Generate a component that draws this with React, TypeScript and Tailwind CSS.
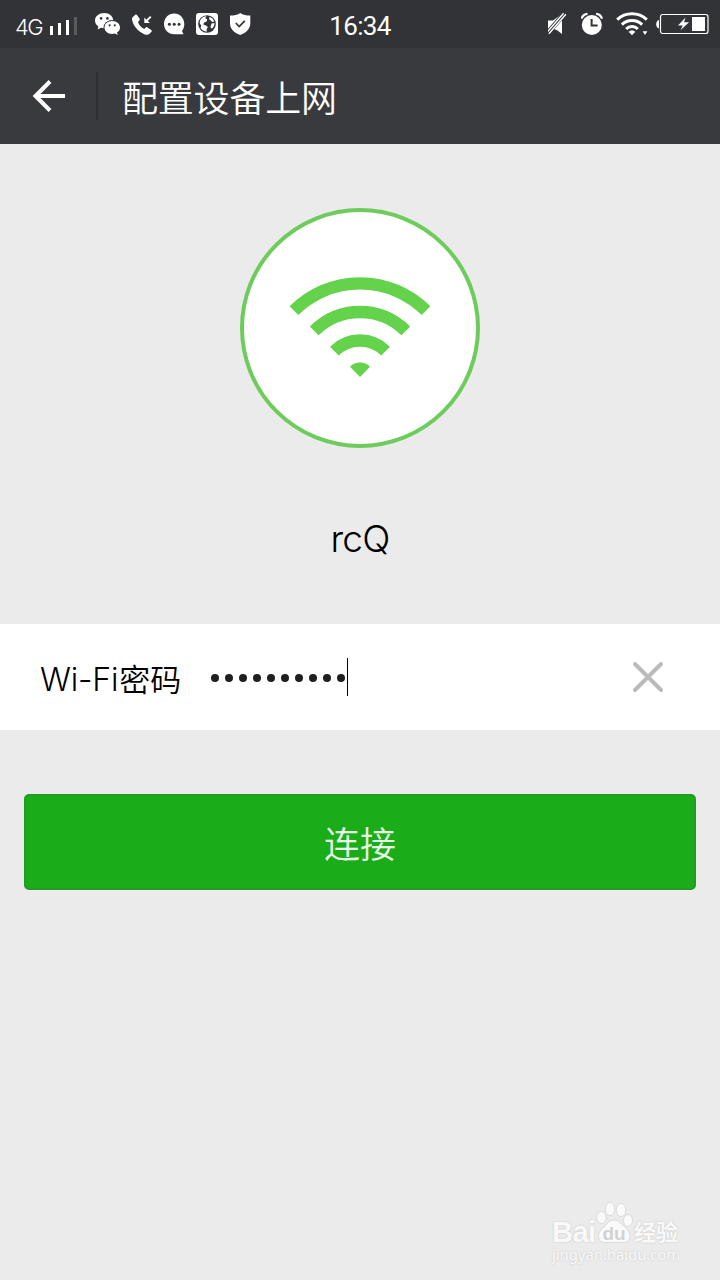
import type { ReactNode } from "react"
import clsx from "clsx"

const PASSWORD_LENGTH = 10

function StatusIcon({ width, className, children }: { width: number; className?: string; children: ReactNode }) {
  return (
    <svg
      width={width}
      height={24}
      viewBox={`0 0 ${width} 24`}
      fill="currentColor"
      className={clsx("shrink-0", className)}
    >
      {children}
    </svg>
  )
}

function StatusBar() {
  return (
    <div className="h-12 bg-[#323337] text-white flex items-center justify-between relative">
      {/* Left: network + notifications */}
      <div className="flex items-center pl-[15px]">
        <span className="w-[35px] text-[22px] leading-6 tracking-[-1.5px] font-['Inter'] font-[350] relative top-[3px]">4G</span>

        {/* Signal bars */}
        <StatusIcon width={28}>
          <path d="M0 14h3v9H0zM8 11h3v12H8zM16 8h3v15h-3z" />
          <path d="M24 5h3v18h-3z" fill="#5a5b5f" />
        </StatusIcon>

        {/* WeChat */}
        <StatusIcon width={26} className="ml-[17px]">
          <path d="M9.2 1C4.1 1 0 4.3 0 8.6c0 2.5 1.3 4.6 3.4 6l-.8 3 3.3-1.8c1 .3 2.1.5 3.3.5C14.300 16.300 18.300 13 18.300 8.700S14.300 1 9.200 1z" />
          <ellipse cx="17.200" cy="15.500" rx="8.700" ry="7.600" fill="#323337" />
          <path d="M17.200 8.900c-4.400 0-7.700 2.900-7.700 6.500s3.300 6.500 7.700 6.500c1 0 2-.2 2.800-.4l2.700 1.500-.7-2.500c1.900-1.200 3-3 3-5.100 0-3.600-3.400-6.500-7.800-6.500z" />
          <g fill="#323337">
            <circle cx="6.100" cy="6.400" r="1.300" />
            <circle cx="12.400" cy="6.400" r="1.300" />
            <circle cx="14.600" cy="13.300" r="1.100" />
            <circle cx="19.800" cy="13.300" r="1.100" />
          </g>
        </StatusIcon>

        {/* Incoming call */}
        <StatusIcon width={21} className="ml-[11px]">
          <path d="M0.300 5.500 3.300 2.700c.6-.5 1.300-.4 1.700.2L7.600 6.800c.4.7.3 1.300-.2 1.800L6 10c.9 3 3.200 5.500 6.300 6.900l1.400-1.400c.5-.5 1.100-.5 1.700-.1l3.900 2.600c.6.5.7 1.100.2 1.700l-2.200 2.300c-1 .9-2.700 1-4.500.4C6.700 20.200 1.400 14.500.2 8.300c-.2-1.100-.2-2.200.1-2.800z" />
          <path d="M18.800 4.600 14.500 8.900" fill="none" stroke="currentColor" strokeWidth="2" />
          <path d="M12.300 5.500v5.600h5.600z" />
        </StatusIcon>

        {/* Message */}
        <StatusIcon width={21} className="ml-[11px]">
          <path d="M10.200 1.500C4.300 1.500 0 6.200 0 12s4.400 10.300 10.200 10.300h9.300L18 19c1.500-1.900 2.300-4.300 2.300-7C20.300 6.200 16 1.500 10.200 1.500z" />
          <g fill="#323337">
            <circle cx="5.400" cy="12.300" r="1.500" />
            <circle cx="10.200" cy="12.300" r="1.500" />
            <circle cx="15" cy="12.300" r="1.500" />
          </g>
        </StatusIcon>

        {/* Browser */}
        <StatusIcon width={22} className="ml-[11px]">
          <rect y="1" width="22" height="22" rx="3" />
          <circle cx="11" cy="12" r="8.800" fill="#323337" />
          <path d="M4.300 8c1.400-2.300 3.400-3.700 6.200-3.800L9.300 6l1.900 1.600-.6 2-2.500.8-.8 2.200 2.600.9 2 1.600-1.400 2.300.6 2.200c-3 .2-5.200-1.300-6.500-3.600l.6-2.600-1.500-2.100c-.1-1.200.1-2.300.6-3.300z" />
          <path d="m13.600 4.700 3.200 2 1.500 2.800-2.100.5-1.600-1.800-1.600-.9zM15.500 11.500l3-.4c0 2.500-.8 4.300-2.600 5.700l-1.500-1.500z" />
        </StatusIcon>

        {/* Security */}
        <StatusIcon width={21} className="ml-3">
          <path d="M10.200 1c2.700 1.800 6 2.500 10.100 2.600v7.700c0 5.500-3.800 9.300-10.100 11.700C3.900 20.600 0 16.800 0 11.300V3.600C4.200 3.500 7.500 2.800 10.200 1z" />
          <path d="m5.800 11 3.400 3.500 5.600-5.700" fill="none" stroke="#323337" strokeWidth="1.700" />
        </StatusIcon>
      </div>

      {/* Clock */}
      <div className="absolute inset-x-0 top-2 text-center text-[26px] leading-9 tracking-[-0.6px] font-['Roboto']">16:34</div>

      {/* Right: mute, alarm, wifi, battery */}
      <div className="flex items-center pr-[11px]">
        <StatusIcon width={20}>
          <path d="M0 8.500h5L14 2v20l-4.500-3.500L5 16.500H0z" />
          <path d="M-.5 21 17 1" stroke="#323337" strokeWidth="5" />
          <path d="M.9 21.700 17.900 2.200M-.4 19.600 15.600 1.300" stroke="currentColor" strokeWidth="1.400" />
        </StatusIcon>

        <StatusIcon width={22} className="ml-[13px]">
          <circle cx="10.800" cy="13" r="10" />
          <path d="M.6 6.700C1.400 3.800 3.400 2 6.500 1.800M21 6.700c-.8-2.900-2.800-4.700-5.900-4.900" fill="none" stroke="currentColor" strokeWidth="2.200" />
          <path d="M10.600 7v6.600h6" fill="none" stroke="#323337" strokeWidth="2" />
        </StatusIcon>

        <StatusIcon width={32} className="ml-[13px]">
          <g fill="none" stroke="currentColor" strokeWidth="3">
            <path d="M1.200 7.600a21.500 21.500 0 0 1 29.600 0" />
            <path d="M5.900 12.600a14.600 14.600 0 0 1 20.200 0" />
            <path d="M10.100 17a8.500 8.500 0 0 1 11.800 0" />
          </g>
          <path d="M12.600 19.800a5 5 0 0 1 6.800 0L16 23.300zM26.600 19.300h4.800L29 23z" />
        </StatusIcon>

        <StatusIcon width={53} className="ml-2">
          <path d="M3 8v8.500C1.200 16 .2 14.500.2 12.200S1.200 8.500 3 8z" />
          <rect x="4.500" y="2.500" width="47.500" height="19" rx="2.200" fill="none" stroke="currentColor" strokeWidth="1.200" />
          <path d="M29.500 5.500 22 13.500h4.800L24.500 18.300l8.500-8h-5z" />
          <path d="M36 5h13v14H36z" />
        </StatusIcon>
      </div>
    </div>
  )
}

function Header() {
  return (
    <header className="h-24 bg-[#393a3e] text-white flex items-center">
      <svg width="33" height="32" viewBox="0 0 33 32" fill="none" stroke="currentColor" strokeWidth="4" className="ml-8">
        <path d="M18 1.500 3.500 16 18 30.500M2.500 16H33" />
      </svg>
      <div className="w-0.5 h-12 bg-[#2e2f32] ml-[31px]" />
      <h1 className="ml-6 text-[36px] leading-[48px] tracking-[-0.2px] font-[350] relative top-[3px]">配置设备上网</h1>
    </header>
  )
}

function WifiBadge() {
  return (
    <svg width="240" height="240" viewBox="0 0 240 240" fill="none">
      <circle cx="120" cy="120" r="118" fill="#fff" stroke="#6dcc5c" strokeWidth="4" />
      <g stroke="#65d24c" strokeWidth="12.400">
        <path d="M54 102.700a93.300 93.300 0 0 1 132 0" />
        <path d="M74.200 122.900a64.800 64.800 0 0 1 91.600 0" />
        <path d="M94.400 143.100a36.200 36.200 0 0 1 51.200 0" />
      </g>
      <path d="M110 158.700a14.200 14.200 0 0 1 20 0L120 168.900z" fill="#65d24c" />
    </svg>
  )
}

function Watermark() {
  return (
    <div className="absolute left-[552px] top-[1200px] w-[130px] text-[#f9f9f9] [text-shadow:0_0_2px_#c4c4c4]">
      <div className="h-[44px] flex items-end">
        <span className="w-[43px] text-[29px] leading-6 font-bold font-['Liberation_Sans'] tracking-[-0.5px]">Bai</span>
        <svg width="38" height="44" viewBox="0 0 38 44" fill="#fafafa" stroke="#dadada" strokeWidth="1" className="shrink-0">
          <ellipse cx="6.500" cy="17.500" rx="4.800" ry="6" />
          <ellipse cx="15" cy="9" rx="4.800" ry="6.600" />
          <ellipse cx="26" cy="10" rx="4.800" ry="6.600" />
          <ellipse cx="33" cy="20.500" rx="4.600" ry="6" />
          <path d="M19 20c5 0 7.500 4 10.500 7 3 2.500 5.500 5 5.500 9 0 4.500-2.500 6.500-7 6.500H11c-5 0-7.500-2-7.500-6.500 0-4 2.500-6.500 5.500-9 3-3 5-7 10-7z" />
          <text x="19" y="39.500" textAnchor="middle" fill="#d2d2d2" stroke="none" className="text-[19px] font-bold font-['Liberation_Sans'] [text-shadow:none]">du</text>
        </svg>
        <span className="text-[22px] leading-6 font-bold whitespace-nowrap ml-px">经验</span>
      </div>
      <div className="mt-0.5 text-[15px] leading-4 whitespace-nowrap font-['Noto_Sans'] tracking-[-0.1px]">jingyan.baidu.com</div>
    </div>
  )
}

export default function App() {
  return (
    <div className="w-[720px] h-[1280px] bg-[#ebebeb] relative overflow-hidden font-['Inter','Noto_Sans_CJK_SC',sans-serif]">
      <StatusBar />
      <Header />

      {/* Network */}
      <div className="h-[480px] pt-16 flex flex-col items-center">
        <WifiBadge />
        <div className="mt-[67px] text-[37px] leading-[48px] font-[350] tracking-[-0.8px] text-black">rcQ</div>
      </div>

      {/* Password row */}
      <div className="h-[106px] bg-white pl-10 pr-14 flex items-center">
        <label className="w-[171px] shrink-0 text-[31px] leading-10 text-black whitespace-nowrap relative top-[3px]">
          <span className="text-[32px] font-[350] tracking-[-0.2px]">Wi-Fi</span>
          <span className="font-[350] ml-px">密码</span>
        </label>
        <div className="flex items-center">
          <div className="flex gap-1.5 relative top-px">
            {Array.from({ length: PASSWORD_LENGTH }, (_, i) => (
              <span key={i} className="size-2 rounded-full bg-[#202020]" />
            ))}
          </div>
          <span className="w-px h-[38px] bg-black ml-0.5" />
        </div>
        <svg width="32" height="32" viewBox="0 0 32 32" stroke="#bbb" strokeWidth="4" strokeLinecap="round" className="ml-auto">
          <path d="m3 3 26 26M29 3 3 29" />
        </svg>
      </div>

      {/* Connect */}
      <div className="px-6 pt-16">
        <button className="w-full h-24 rounded-[5px] border-2 border-[#259b24] bg-[#1aad19] text-[#e8f8e8] text-[36px] font-[350] flex items-center justify-center">
          <span className="leading-[48px] relative top-[3px]">连接</span>
        </button>
      </div>

      <Watermark />
    </div>
  )
}
